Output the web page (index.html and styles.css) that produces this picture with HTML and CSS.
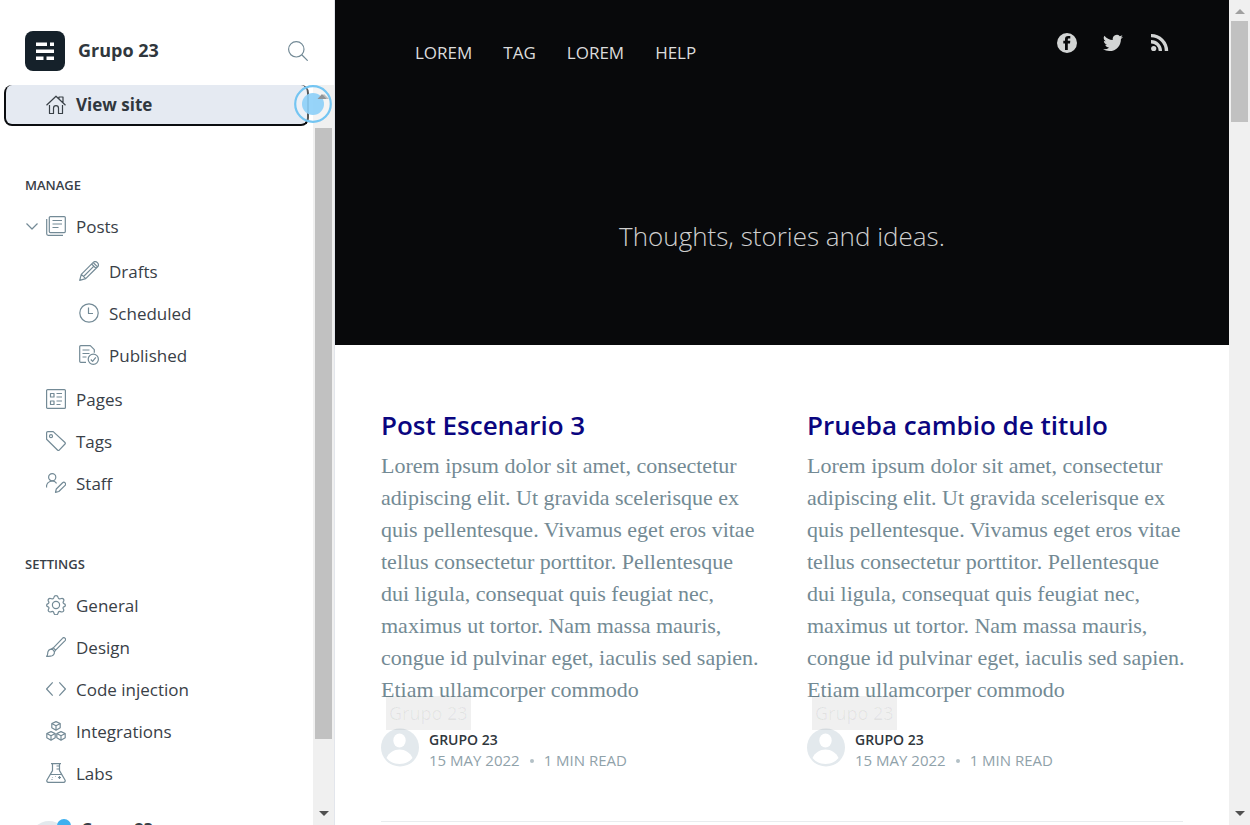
FILE: index.html
```html
<!DOCTYPE html>
<html lang="en">
<head>
<meta charset="utf-8">
<meta name="viewport" content="width=device-width, initial-scale=1">
<title>Grupo 23</title>
<link rel="stylesheet" href="styles.css">
</head>
<body>
<div class="app">
  <aside class="sidebar">
    <header class="brand">
      <svg class="brand-logo" viewBox="0 0 40 40" aria-hidden="true"><rect width="40" height="40" rx="8" fill="#15212a"/><g fill="#fff"><rect x="11" y="11.500" width="11" height="3.500"/><rect x="25" y="11.500" width="4" height="3.500"/><rect x="11" y="18.500" width="18" height="3.500"/><rect x="11" y="25.500" width="7.500" height="3.500"/><rect x="21.500" y="25.500" width="7.500" height="3.500"/></g></svg>
      <span class="brand-name">Grupo 23</span>
      <button class="search" type="button" aria-label="Search"><svg class="icon" viewBox="0 0 20 20"><circle cx="8.300" cy="8.300" r="7.700"/><path d="M14 14l5.700 5.700"/></svg></button>
    </header>
    <div class="scroller">
      <div class="menu">
        <a class="item view-site" href="#"><svg class="icon" viewBox="0 0 20 20"><path d="M.5 10.300L10 1.200l9.500 9.100M13 4V2h4v5.800M3.500 10v8.500h4v-5.300a2.500 2.500 0 0 1 5 0v5.300h4V10"/></svg>View site</a>
        <nav class="group" aria-labelledby="manage">
          <h2 class="group-title" id="manage">Manage</h2>
          <a class="item item-open" href="#"><svg class="icon chevron" viewBox="0 0 12 12"><path d="M.5 3.500L6 9l5.500-5.500"/></svg><svg class="icon" viewBox="0 0 20 20"><rect x="3.300" y=".6" width="16" height="16" rx="1"/><path d="M.7 3v14.800a1.500 1.500 0 0 0 1.500 1.500H17M6.500 4.500h9.500M6.500 8h9.500M6.500 11.500h6"/></svg>Posts</a>
          <div class="subgroup">
            <a class="item" href="#"><svg class="icon" viewBox="0 0 20 20"><path d="M.7 19.300l1.600-6L14 1.600a3.100 3.100 0 0 1 4.400 4.400L6.700 17.700zM2.300 13.300l4.400 4.400M12.600 3l4.400 4.400M14.200 1.500l4.300 4.300M4.600 15.500l9.800-9.800"/></svg>Drafts</a>
            <a class="item" href="#"><svg class="icon" viewBox="0 0 20 20"><circle cx="10" cy="10" r="9.200"/><path d="M9.500 4.500v6h4.500"/></svg>Scheduled</a>
            <a class="item" href="#"><svg class="icon" viewBox="0 0 20 20"><path d="M7 17.300H1.700a1 1 0 0 1-1-1V1.700a1 1 0 0 1 1-1h9.600l4 4v3M3.500 5h7M3.500 8.500h7M3.500 12h4"/><circle cx="14.300" cy="14.300" r="5.100"/><path d="M11.800 14.500l1.800 1.800 3.200-4"/></svg>Published</a>
          </div>
          <a class="item" href="#"><svg class="icon" viewBox="0 0 20 20"><rect x=".6" y=".6" width="18.800" height="18.800" rx="1"/><rect x="4.500" y="4.500" width="3.500" height="3.500"/><rect x="4.500" y="12" width="3.500" height="3.500"/><path d="M10.500 4.500h5.500M10.500 8h5.500M10.500 12h5.500M10.500 15.500h4"/></svg>Pages</a>
          <a class="item" href="#"><svg class="icon" viewBox="0 0 20 20"><path d="M.6 1.800A1.200 1.200 0 0 1 1.800.6h5.400L19 11.500a1 1 0 0 1 0 1.500l-5.800 6.200a1 1 0 0 1-1.500 0L.6 8.300z"/><circle cx="5" cy="5.200" r="1.500"/></svg>Tags</a>
          <a class="item" href="#"><svg class="icon" viewBox="0 0 20 20"><circle cx="6.200" cy="4.200" r="3.600"/><path d="M.6 14.500a5.600 5.600 0 0 1 10-4.200M9.500 19.300l.8-3.300 6.300-6.200a1.700 1.700 0 0 1 2.500 2.500l-6.300 6.200z"/></svg>Staff</a>
        </nav>
        <nav class="group" aria-labelledby="settings">
          <h2 class="group-title" id="settings">Settings</h2>
          <a class="item" href="#"><svg class="icon" viewBox="0 0 20 20"><circle cx="10" cy="10" r="3.600"/><path d="M8 2.100Q8.300.6 10 .6t2 1.500l.3.900q.7 1.300 2.100.8 2.100-.9 3 .2.900 1.100.1 2.300-1 1.600.4 2.300 1.500.4 1.500 1.600t-1.500 1.600q-1.400.7-.5 2.200.8 1.300-.1 2.400t-2.900.200q-1.400-.5-2.100.8l-.3 1q-.3 1.400-2 1.400T8 18.400l-.3-1q-.7-1.300-2.100-.8-2 .9-2.900-.2t-.1-2.400q.9-1.500-.5-2.200Q.6 11.400.6 10.200t1.500-1.600q1.400-.7.4-2.300-.8-1.200.1-2.300t3-.2q1.400.5 2.100-.8z"/></svg>General</a>
          <a class="item" href="#"><svg class="icon" viewBox="0 0 20 20"><path d="M7.300 10.800L16.500 1.300a1.700 1.700 0 0 1 2.600 2.300L9.600 13.100M7.300 10.800l2.300 2.300M.6 19.300c1.400-1 .9-2.800 1.300-4.400.7-2.600 3.600-3.600 5.400-1.800 2 2 1 4.700-1.200 5.700-1.700.7-3.700.5-5.500.5zM5 12.500l2.300-1.700M8.300 15l1.300-1.900"/></svg>Design</a>
          <a class="item" href="#"><svg class="icon" viewBox="0 0 20 20"><path d="M6.700 3.300L.6 10l6.100 6.700M13.300 3.300l6.100 6.700-6.100 6.700"/></svg>Code injection</a>
          <a class="item" href="#"><svg class="icon" viewBox="0 0 20 20"><g id="cube"><path d="M10 .6l4.200 1.900v4.300L10 9.200 5.800 6.800V2.500zM5.800 2.500L10 4.700l4.200-2.200M10 4.700v4.500"/></g><use href="#cube" x="-5" y="10"/><use href="#cube" x="5" y="10"/></svg>Integrations</a>
          <a class="item" href="#"><svg class="icon" viewBox="0 0 20 20"><path d="M5 .6h10M6.500.6v7L1 17a1.600 1.600 0 0 0 1.500 2.400h15A1.600 1.600 0 0 0 19 17l-5.500-9.400v-7M4.200 11.500h11.600M10.500 3h3M10.500 6h3M6.500 14v.5M12 14.500h3M13.500 13v3M5.500 16.500h1M9.500 13.500h.5"/></svg>Labs</a>
        </nav>
        <div class="account"><span class="account-photo"></span><span class="account-name">Grupo 23</span></div>
      </div>
      <div class="bar"><span class="arrow arrow-up"></span><span class="thumb thumb-long"></span><span class="arrow arrow-down"></span></div>
      <svg class="pulse" viewBox="0 0 38 38" aria-hidden="true"><circle cx="19" cy="19" r="17.800" fill="#fff" fill-opacity=".3" stroke="#74c5f2" stroke-width="2.200"/><circle cx="19" cy="19" r="11" fill="#8ccff8" fill-opacity=".9"/><path d="M23.500 14h9L28 9z" fill="#8f9498"/></svg>
    </div>
  </aside>

  <main class="site">
    <header class="hero">
      <div class="topbar">
        <nav class="links"><a href="#">Lorem</a><a href="#">Tag</a><a href="#">Lorem</a><a href="#">Help</a></nav>
        <div class="social">
          <a href="#" aria-label="Facebook"><svg viewBox="0 0 20 20"><path fill-rule="evenodd" d="M10 0a10 10 0 1 0 0 20 10 10 0 0 0 0-20zM8 17V10.500H6.300V7.700H8V6c0-2 1-3.100 3.100-3.100h2.200v2.700h-1.500c-.8 0-1 .4-1 1.100v1h2.500l-.3 2.800h-2.200V17z"/></svg></a>
          <a href="#" aria-label="Twitter"><svg viewBox="0 0 24 24"><path d="M24 4.600a10 10 0 0 1-2.800.8 4.900 4.900 0 0 0 2.100-2.700c-1 .6-2 1-3.100 1.200a4.900 4.900 0 0 0-8.400 4.500C7.700 8.200 4.100 6.200 1.700 3.200a4.900 4.900 0 0 0 1.500 6.600c-.8 0-1.600-.2-2.200-.6v.1c0 2.400 1.700 4.400 3.900 4.800-.7.200-1.500.2-2.200.1.600 2 2.400 3.400 4.600 3.400A9.900 9.900 0 0 1 0 19.500 13.900 13.900 0 0 0 7.500 21.700c9.100 0 14.300-7.700 14-14.600A10 10 0 0 0 24 4.600z"/></svg></a>
          <a href="#" aria-label="RSS"><svg viewBox="0 0 20 20"><circle cx="4.700" cy="15.500" r="2.600"/><path d="M2 1v3.300A13.700 13.700 0 0 1 15.800 18h3.400A17 17 0 0 0 2 1zM2 7v3.400A7.600 7.600 0 0 1 9.700 18H13A11 11 0 0 0 2 7z"/></svg></a>
        </div>
      </div>
      <p class="tagline">Thoughts, stories and ideas.</p>
    </header>
    <div class="feed">
      <article class="post">
        <h2 class="post-title">Post Escenario 3</h2>
        <p class="excerpt">Lorem ipsum dolor sit amet, consectetur<br>adipiscing elit. Ut gravida scelerisque ex<br>quis pellentesque. Vivamus eget eros vitae<br>tellus consectetur porttitor. Pellentesque<br>dui ligula, consequat quis feugiat nec,<br>maximus ut tortor. Nam massa mauris,<br>congue id pulvinar eget, iaculis sed sapien.<br>Etiam ullamcorper commodo</p>
        <footer class="byline">
          <span class="tip">Grupo 23</span>
          <svg class="avatar" viewBox="0 0 38 38" aria-hidden="true"><circle cx="19" cy="19" r="19" fill="#e3e9ed"/><ellipse cx="18.500" cy="12" rx="6.200" ry="7" fill="#fff"/><path d="M5.500 29.500C8 24 13 21 18.500 21s10.500 3 13 8.500C28 33.500 24 35.500 18.500 35.500s-9.500-2-13-6z" fill="#fff"/></svg>
          <div class="meta"><a class="author" href="#">Grupo 23</a><span class="date">15 May 2022<span class="dot"></span>1 min read</span></div>
        </footer>
      </article>
      <article class="post">
        <h2 class="post-title">Prueba cambio de titulo</h2>
        <p class="excerpt">Lorem ipsum dolor sit amet, consectetur<br>adipiscing elit. Ut gravida scelerisque ex<br>quis pellentesque. Vivamus eget eros vitae<br>tellus consectetur porttitor. Pellentesque<br>dui ligula, consequat quis feugiat nec,<br>maximus ut tortor. Nam massa mauris,<br>congue id pulvinar eget, iaculis sed sapien.<br>Etiam ullamcorper commodo</p>
        <footer class="byline">
          <span class="tip">Grupo 23</span>
          <svg class="avatar" viewBox="0 0 38 38" aria-hidden="true"><circle cx="19" cy="19" r="19" fill="#e3e9ed"/><ellipse cx="18.500" cy="12" rx="6.200" ry="7" fill="#fff"/><path d="M5.500 29.500C8 24 13 21 18.500 21s10.500 3 13 8.500C28 33.500 24 35.500 18.500 35.500s-9.500-2-13-6z" fill="#fff"/></svg>
          <div class="meta"><a class="author" href="#">Grupo 23</a><span class="date">15 May 2022<span class="dot"></span>1 min read</span></div>
        </footer>
      </article>
    </div>
  </main>
  <div class="bar bar-page"><span class="arrow arrow-up"></span><span class="thumb thumb-short"></span><span class="arrow arrow-down"></span></div>
</div>
</body>
</html>
```

FILE: styles.css
```css
* { box-sizing: border-box; }
body {
  margin: 0;
  font-family: "Open Sans", "Noto Sans", sans-serif;
  color: #394047;
  background: #fff;
}
a { color: inherit; text-decoration: none; }
h2, p { margin: 0; }
svg { display: block; flex: none; }

.app { display: flex; height: 100vh; overflow: hidden; }

/* Sidebar */
.sidebar {
  display: flex;
  flex-direction: column;
  flex: none;
  width: 335px;
  border-right: 1px solid #e3e6ec;
}
.brand {
  display: flex;
  align-items: center;
  flex: none;
  gap: 13px;
  height: 85px;
  padding: 16px 26px 0 25px;
}
.brand-logo { width: 40px; height: 40px; }
.brand-name { flex: 1; padding-bottom: 2px; font-size: 18px; font-weight: 700; color: #30373d; }
.search { padding: 0; border: 0; background: none; }
.icon {
  width: 20px;
  height: 20px;
  fill: none;
  stroke: #738a96;
  stroke-width: 1.2;
  stroke-linejoin: round;
}
.scroller { position: relative; display: flex; flex: 1; min-height: 0; }
.menu { flex: 1; min-width: 0; overflow: hidden; }
.item {
  display: flex;
  align-items: center;
  gap: 10px;
  height: 42px;
  padding-left: 46px;
  font-size: 17px;
}
.view-site {
  height: 41px;
  margin: 0 4px;
  padding-left: 40px;
  border: 2px solid #0b0d10;
  border-top: 0;
  border-radius: 8px;
  font-weight: 700;
  color: #30373d;
  background: #e5eaf2;
}
.view-site .icon { stroke: #394047; }
.item-open { gap: 8px; padding-left: 26px; }
.item-open .icon + .icon { margin-right: 2px; }
.chevron { width: 12px; height: 12px; }
.group { padding-top: 49px; }
.group + .group { padding-top: 50px; }
.group-title {
  padding: 0 25px 10px;
  font-size: 13px;
  font-weight: 600;
  line-height: 20px;
  text-transform: uppercase;
}
.subgroup { padding: 3px 0 2px; }
.subgroup .item { padding-left: 79px; }
.account { display: flex; gap: 13px; padding: 25px 0 0 30px; }
.account-photo {
  position: relative;
  width: 38px;
  height: 38px;
  margin-top: 2px;
  border-radius: 50%;
  background: #e3e9ed;
}
.account-photo::after {
  content: "";
  position: absolute;
  top: -2px;
  right: -3px;
  width: 14px;
  height: 14px;
  border-radius: 50%;
  background: #3eb0ef;
}
.account-name { font-size: 16px; font-weight: 700; line-height: 20px; }
.pulse { position: absolute; top: 0; right: 2px; width: 38px; height: 38px; }

/* Scrollbars */
.bar {
  display: flex;
  flex-direction: column;
  align-items: center;
  flex: none;
  width: 21px;
  background: #f0f0f0;
}
.arrow { flex: none; border: 5px solid transparent; }
.arrow-up { margin: 9px 0 7px; border-top: 0; border-bottom-color: #a0a0a0; }
.arrow-down { margin: auto 0 9px; border-bottom: 0; border-top-color: #505050; }
.scroller .arrow-up { margin-bottom: 29px; }
.thumb { width: 17px; background: #c1c1c1; }
.thumb-long { height: 611px; }
.thumb-short { height: 101px; }

/* Site */
.site { flex: 1; min-width: 0; overflow: hidden; }
.hero { height: 345px; color: #fff; background: #08090b; }
.topbar { display: flex; justify-content: space-between; padding: 33px 60px 0 80px; }
.links {
  display: flex;
  gap: 31px;
  padding-top: 8px;
  font-size: 17px;
  line-height: 24px;
  text-transform: uppercase;
  color: #dcdcdc;
}
.social { display: flex; gap: 26px; }
.social svg { width: 20px; height: 20px; fill: #d2d4d4; }
.tagline {
  padding-top: 151px;
  font-size: 26px;
  font-weight: 300;
  line-height: 40px;
  text-align: center;
  color: #cfcfcf;
}
.feed {
  display: grid;
  grid-template-columns: repeat(2, minmax(0, 1fr));
  column-gap: 50px;
  margin: 0 46px;
  padding: 60px 0 50px;
  border-bottom: 1px solid #e9ecee;
}
.post-title { font-size: 26px; font-weight: 600; line-height: 40px; color: #0a0580; }
.excerpt {
  padding-top: 5px;
  font-family: "Liberation Serif", Georgia, serif;
  font-size: 22px;
  line-height: 32px;
  white-space: nowrap;
  color: #738a94;
}
.byline { position: relative; display: flex; gap: 10px; padding-top: 22px; }
.avatar { width: 38px; height: 39px; }
.meta {
  display: flex;
  flex-direction: column;
  padding-top: 1px;
  font-size: 15px;
  line-height: 21px;
  text-transform: uppercase;
}
.author { font-size: 14px; font-weight: 600; color: #30373d; }
.date { display: flex; align-items: center; color: #90a2aa; }
.dot { width: 4px; height: 4px; margin: 0 10px; border-radius: 50%; background: #b3c0c6; }
.tip {
  position: absolute;
  top: -10px;
  left: 5px;
  padding: 0 3px;
  font-size: 18px;
  line-height: 34px;
  color: rgba(0, 0, 0, .06);
  background: rgba(0, 0, 0, .06);
}
```
